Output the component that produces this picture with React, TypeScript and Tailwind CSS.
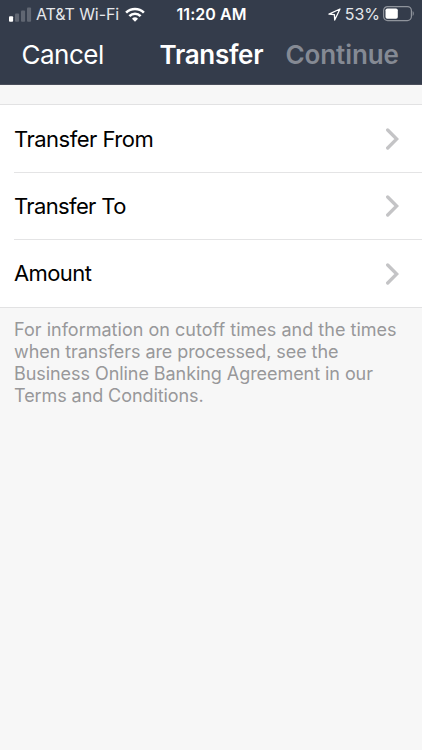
import React from 'react';

const SignalIcon = () => (
  <svg width="23" height="15" viewBox="0 0 23 15" fill="#fff">
    <rect x="0" y="9.3" width="4.1" height="5.4" rx="1" />
    <rect x="6" y="6.6" width="4.1" height="8.1" rx="1" opacity="0.22" />
    <rect x="12" y="3.6" width="4.1" height="11.1" rx="1" opacity="0.22" />
    <rect x="18" y="0.6" width="4.1" height="14.1" rx="1" opacity="0.22" />
  </svg>
);

const WifiIcon = () => (
  <svg width="20" height="15" viewBox="0 0 20 15" fill="none" stroke="#fff" strokeWidth="2.6">
    <path d="M1.1 5.6a12.7 12.7 0 0 1 17.8 0" />
    <path d="M4.4 9.1a7.9 7.9 0 0 1 11.2 0" />
    <path d="M10 14.8l-3-3.1a4.4 4.4 0 0 1 6 0z" fill="#fff" stroke="none" />
  </svg>
);

const LocationIcon = () => (
  <svg width="13" height="13" viewBox="0 0 13 13" fill="none" stroke="#fff" strokeWidth="1.3" strokeLinejoin="round">
    <path d="M12 1L1 6.2l5.4.4.3 5.4z" />
  </svg>
);

const BatteryIcon = () => (
  <svg width="31" height="16" viewBox="0 0 31 16" fill="none">
    <rect x="0.6" y="0.6" width="27.8" height="14" rx="4" stroke="#fff" strokeOpacity="0.45" strokeWidth="1.2" />
    <rect x="2.5" y="2.5" width="12.3" height="10.2" rx="1.8" fill="#fff" />
    <path d="M29.7 5.1c1.3.7 1.3 4.3 0 5z" fill="#fff" fillOpacity="0.5" />
  </svg>
);

const ChevronIcon = () => (
  <svg width="14" height="24" viewBox="0 0 14 24" fill="none" stroke="#c4c4c6" strokeWidth="3.3" strokeLinecap="round">
    <path d="M2.7 3l9 9-9 9" />
  </svg>
);

const App = () => {
  const rows = [
    { id: 1, label: 'Transfer From', style: 'h-[68px] pt-px tracking-[-0.5px]' },
    { id: 2, label: 'Transfer To', style: 'h-[67px] tracking-[-0.63px]' },
    { id: 3, label: 'Amount', style: 'h-[67px] tracking-[-0.6px]' }
  ];

  const notes = [
    { text: 'For information on cutoff times and the times', tracking: 'tracking-[0.02px]' },
    { text: 'when transfers are processed, see the', tracking: 'tracking-[-0.07px]' },
    { text: 'Business Online Banking Agreement in our', tracking: 'tracking-[-0.06px]' },
    { text: 'Terms and Conditions.', tracking: 'tracking-[-0.08px]' }
  ];

  return (
    <div className="min-h-screen w-full bg-[#f7f7f7] font-['Inter',sans-serif]">
      <header className="h-[85px] border-b border-[#4a4e5b] bg-[#343c4b] text-white">
        <div className="grid h-7 grid-cols-[1fr_auto_1fr] items-center pl-[9px] pr-[8px] text-[16px] leading-7">
          <div className="flex items-center">
            <SignalIcon />
            <span className="ml-1 w-[84px] whitespace-nowrap tracking-[-0.1px] text-[#e6e8ec]">AT&amp;T Wi-Fi</span>
            <span className="ml-[5px]"><WifiIcon /></span>
          </div>
          <span className="whitespace-nowrap font-semibold tracking-[0.05px]">11:20 AM</span>
          <div className="flex items-center justify-end">
            <LocationIcon />
            <span className="ml-1 mr-[3px] whitespace-nowrap text-[#e6e8ec]">53%</span>
            <BatteryIcon />
          </div>
        </div>
        <div className="flex h-[53px] items-center whitespace-nowrap pl-[21.5px] text-[26px] leading-[53px]">
          <button className="w-[138px] text-left tracking-[-0.5px]">Cancel</button>
          <h1 className="w-[126px] font-semibold tracking-[-0.3px]">Transfer</h1>
          <button className="font-semibold tracking-[-0.1px] text-[#858a94]">Continue</button>
        </div>
      </header>

      <main className="pt-[19px]">
        <ul className="border-y border-[#e2e2e3] bg-white pl-[14px]">
          {rows.map((row) => (
            <li
              key={row.id}
              className={`flex items-center justify-between border-b border-[#e4e4e5] pr-[23px] text-[22px] text-black last:border-b-0 ${row.style}`}
            >
              <span>{row.label}</span>
              <ChevronIcon />
            </li>
          ))}
        </ul>
        <p className="px-[14px] pt-[11px] text-[18px] leading-[22px] text-[#98989a]">
          {notes.map((line) => (
            <span key={line.text} className={`block whitespace-nowrap ${line.tracking}`}>{line.text}</span>
          ))}
        </p>
      </main>
    </div>
  );
};

export default App;
